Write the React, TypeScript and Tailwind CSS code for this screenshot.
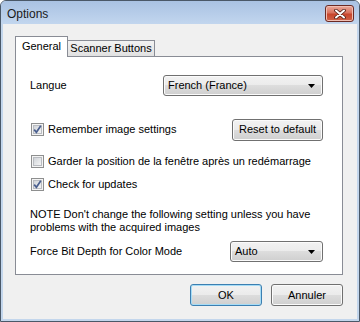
const btnBg =
  "bg-[linear-gradient(#f2f2f2_0%,#ebebeb_50%,#dddddd_50%,#cfcfcf_100%)]"

const CheckBox = ({ checked }: { checked?: boolean }) => (
  <svg width="13" height="13" viewBox="0 0 13 13" className="shrink-0">
    <defs>
      <linearGradient id="cbg" x1="0" y1="0" x2="1" y2="1">
        <stop offset="0" stopColor="#cdd1d6" />
        <stop offset="1" stopColor="#f7f7f7" />
      </linearGradient>
    </defs>
    <rect x="0.5" y="0.5" width="12" height="12" fill="#f4f4f4" stroke="#8e8f8f" />
    <rect x="2.5" y="2.5" width="8" height="8" fill="url(#cbg)" stroke="#b9bcc1" />
    {checked && (
      <path
        d="M3.2 6.6 L5.4 9.3 L9.8 2.8"
        fill="none"
        stroke="#4a5f8f"
        strokeWidth="1.7"
      />
    )}
  </svg>
)

const Arrow = () => (
  <svg width="7" height="4" viewBox="0 0 7 4" className="shrink-0">
    <path d="M0 0 H7 L3.5 4 Z" fill="#000" />
  </svg>
)

const Select = ({ value, width }: { value: string; width: string }) => (
  <div
    className={`${width} h-[21px] flex items-center justify-between rounded-[3px] border border-[#707070] ${btnBg} pl-[4px] pr-[7px] shadow-[inset_0_0_0_1px_#fbfbfb]`}
  >
    <span>{value}</span>
    <Arrow />
  </div>
)

const Button = ({
  children,
  width,
  primary,
}: {
  children: React.ReactNode
  width: string
  primary?: boolean
}) => (
  <div
    className={`${width} h-[22px] flex items-center justify-center rounded-[3px] border ${
      primary
        ? "border-[#3c7fb1] shadow-[inset_0_0_0_1px_#a6dcf6]"
        : "border-[#707070] shadow-[inset_0_0_0_1px_#fbfbfb]"
    } ${btnBg}`}
  >
    {children}
  </div>
)

const CheckRow = ({
  checked,
  label,
}: {
  checked?: boolean
  label: string
}) => (
  <div className="flex items-center gap-[4px] pl-[1px]">
    <CheckBox checked={checked} />
    <span>{label}</span>
  </div>
)

export default function App() {
  return (
    <div className="w-[360px] h-[322px] flex flex-col overflow-hidden rounded-t-[6px] border border-[#4a5868] bg-[#c3d6ec] font-['Liberation_Sans',Arial,sans-serif] text-[11px] leading-[13px] text-black">
      {/* title bar */}
      <div className="h-[23px] shrink-0 flex items-start bg-[linear-gradient(#a9c2e3,#c2d6ee)]">
        <span className="pl-[6px] pt-[6px] text-[12px] leading-[14px] text-[#1a1a1a]">
          Options
        </span>
        <div className="ml-auto mr-[5px] mt-[4px] w-[29px] h-[17px] flex items-center justify-center rounded-[3px] border border-[#6b2a24] bg-[linear-gradient(#e9a99b_0%,#d9735f_45%,#c7452c_55%,#d0644a_100%)] shadow-[inset_0_0_0_1px_#f0bfb3]">
          <svg width="12" height="10" viewBox="0 0 12 10">
            <path
              d="M2 1.5 L10 8.5 M10 1.5 L2 8.5"
              stroke="#4a1b14"
              strokeWidth="3.6"
              strokeLinecap="round"
            />
            <path
              d="M2 1.5 L10 8.5 M10 1.5 L2 8.5"
              stroke="#fff"
              strokeWidth="2"
              strokeLinecap="round"
            />
          </svg>
        </div>
      </div>

      {/* client area */}
      <div className="flex-1 mx-[2px] mb-[2px] flex flex-col bg-[#f0f0f0] pl-[12px] pt-[12px]">
        {/* tabs */}
        <div className="flex items-end h-[20px]">
          <div className="relative z-10 -mb-px w-[53px] h-[21px] flex justify-center border border-b-0 border-[#898c95] bg-white pt-[3px]">
            General
          </div>
          <div className="w-[87px] h-[16px] flex justify-center border border-l-0 border-b-0 border-[#898c95] bg-[linear-gradient(#f2f2f2,#e1e1e1)] pt-[1px]">
            Scanner Buttons
          </div>
        </div>

        {/* panel */}
        <div className="w-[328px] h-[219px] flex flex-col border border-[#898c95] bg-white pl-[14px]">
          <div className="mt-[18px] h-[21px] flex items-center">
            <span className="w-[133px]">Langue</span>
            <Select value="French (France)" width="w-[160px]" />
          </div>

          <div className="mt-[23px] h-[21px] flex items-center">
            <div className="w-[202px]">
              <CheckRow checked label="Remember image settings" />
            </div>
            <Button width="w-[91px]">Reset to default</Button>
          </div>

          <div className="mt-[13px] h-[17px] flex items-center">
            <CheckRow label="Garder la position de la fenêtre après un redémarrage" />
          </div>

          <div className="mt-[6px] h-[17px] flex items-center">
            <CheckRow checked label="Check for updates" />
          </div>

          <p className="mt-[15px] w-[290px]">
            NOTE Don't change the following setting unless you have problems
            with the acquired images
          </p>

          <div className="mt-[7px] h-[21px] flex items-center">
            <span className="w-[200px]">Force Bit Depth for Color Mode</span>
            <Select value="Auto" width="w-[93px]" />
          </div>
        </div>

        {/* dialog buttons */}
        <div className="mt-[9px] w-[328px] flex justify-end gap-[9px]">
          <Button width="w-[72px]" primary>
            OK
          </Button>
          <Button width="w-[72px]">Annuler</Button>
        </div>
      </div>
    </div>
  )
}
